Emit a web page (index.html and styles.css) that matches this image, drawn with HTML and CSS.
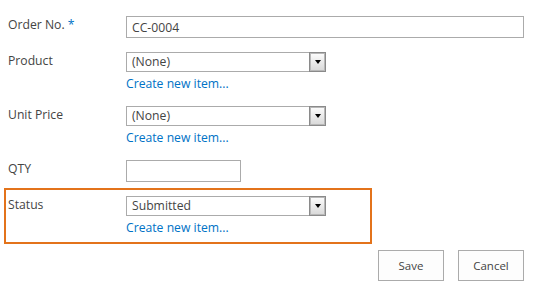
FILE: index.html
```html
<!DOCTYPE html>
<html lang="en">
<head>
    <meta charset="UTF-8">
    <title>New Order</title>
    <link rel="stylesheet" href="styles.css">
</head>
<body>
    <div class="form">
        <div class="row">
            <div class="label">Order No. <span class="req">*</span></div>
            <div class="field">
                <input type="text" class="text-input wide" value="CC-0004">
            </div>
        </div>

        <div class="row">
            <div class="label">Product</div>
            <div class="field">
                <div class="select">
                    <div class="select-value">(None)</div>
                    <div class="select-arrow"><span class="tri"></span></div>
                </div>
                <a class="create-link" href="#">Create new item...</a>
            </div>
        </div>

        <div class="row">
            <div class="label">Unit Price</div>
            <div class="field">
                <div class="select">
                    <div class="select-value">(None)</div>
                    <div class="select-arrow"><span class="tri"></span></div>
                </div>
                <a class="create-link" href="#">Create new item...</a>
            </div>
        </div>

        <div class="row tight">
            <div class="label">QTY</div>
            <div class="field">
                <input type="text" class="text-input short" value="">
            </div>
        </div>

        <!-- highlighted field -->
        <div class="row highlight">
            <div class="label">Status</div>
            <div class="field">
                <div class="select">
                    <div class="select-value">Submitted</div>
                    <div class="select-arrow"><span class="tri"></span></div>
                </div>
                <a class="create-link" href="#">Create new item...</a>
            </div>
        </div>

        <div class="actions">
            <button type="button">Save</button>
            <button type="button">Cancel</button>
        </div>
    </div>
</body>
</html>
```

FILE: styles.css
```css
body {
    margin: 0;
    background: #fff;
    font-family: "Open Sans", "Liberation Sans", sans-serif;
    font-size: 12.2px;
    color: #444;
}
.form {
    padding: 16px 20px 0 8px;
}
.row {
    display: grid;
    grid-template-columns: 118px 1fr;
    padding-bottom: 14px;
}
.row.tight {
    padding-bottom: 6px;
}
.label {
    line-height: 16px;
    padding-top: 1px;
}
.req {
    color: #0072c6;
}
.field {
    display: flex;
    flex-direction: column;
    align-items: flex-start;
}
.text-input {
    box-sizing: border-box;
    height: 22px;
    border: 1px solid #ababab;
    padding: 0 5px;
    font-family: inherit;
    font-size: 12.2px;
    line-height: 20px;
    color: #444;
    outline: none;
}
.text-input.wide { width: 398px; }
.text-input.short { width: 115px; }
.select {
    display: flex;
    width: 200px;
    height: 20px;
}
.select-value {
    flex: 1;
    border: 1px solid #ababab;
    border-right: none;
    padding: 0 5px;
    line-height: 18px;
    color: #444;
}
.select-arrow {
    box-sizing: border-box;
    width: 17px;
    height: 20px;
    border: 1px solid #8a8a8a;
    box-shadow: inset 0 0 0 1px #b8b8b8;
    background: linear-gradient(#fdfdfd, #d8d8d8);
    display: flex;
    align-items: center;
    justify-content: center;
}
.tri {
    width: 0;
    height: 0;
    border-left: 3.5px solid transparent;
    border-right: 3.5px solid transparent;
    border-top: 4px solid #000;
}
.create-link {
    margin-top: 4px;
    line-height: 16px;
    color: #0072c6;
    text-decoration: none;
}
.row.highlight {
    margin-left: -4px;
    border: 2px solid #e3731b;
    padding: 6px 0 6px 2px;
    box-sizing: border-box;
    width: 368px;
}
.actions {
    display: flex;
    justify-content: flex-end;
    gap: 14px;
    margin-top: 6px;
}
.actions button {
    width: 66px;
    height: 31px;
    border: 1px solid #ababab;
    background: #fdfdfd;
    font-family: inherit;
    font-size: 11.5px;
    color: #444;
    padding: 0;
}
```
